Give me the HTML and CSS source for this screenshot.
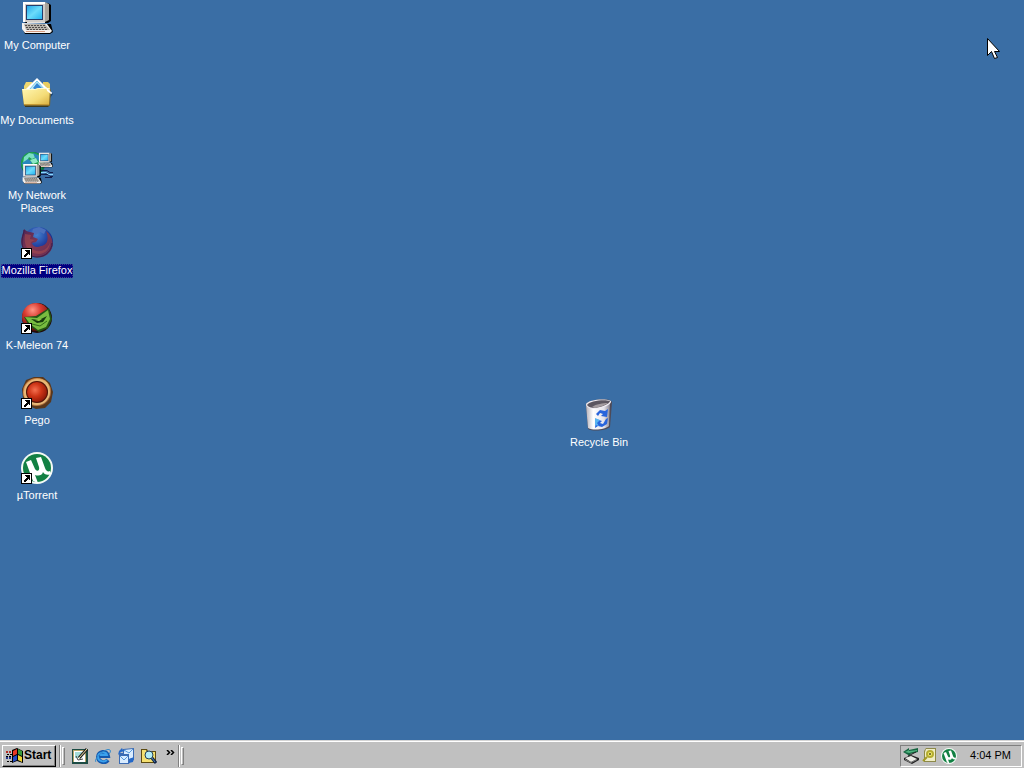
FILE: index.html
```html
<!DOCTYPE html>
<html lang="en">
<head>
<meta charset="utf-8">
<meta name="viewport" content="width=device-width, initial-scale=1">
<title>Desktop</title>
<link rel="stylesheet" href="styles.css">
</head>
<body>
<svg class="defs" aria-hidden="true">
  <defs>
    <linearGradient id="screen" x1="0" y1="0" x2="1" y2="1"><stop offset="0" stop-color="#25a8ea"/><stop offset=".5" stop-color="#6cdcfb"/><stop offset="1" stop-color="#25b4f0"/></linearGradient>
    <linearGradient id="folder" x1="0" y1="0" x2="1" y2="1"><stop offset="0" stop-color="#fff8b4"/><stop offset=".6" stop-color="#f4dc78"/><stop offset="1" stop-color="#d8ac3c"/></linearGradient>
    <linearGradient id="bin" x1="0" y1="0" x2="1" y2="0"><stop offset="0" stop-color="#b4b0b8"/><stop offset=".3" stop-color="#fff"/><stop offset=".75" stop-color="#e4e2ea"/><stop offset="1" stop-color="#8c8894"/></linearGradient>
    <radialGradient id="foxglobe" cx=".45" cy=".25" r=".7"><stop offset="0" stop-color="#4684d0"/><stop offset=".6" stop-color="#1d3b9c"/><stop offset="1" stop-color="#14206c"/></radialGradient>
    <linearGradient id="foxtail" x1="0" y1="0" x2="1" y2="1"><stop offset="0" stop-color="#4c2455"/><stop offset=".5" stop-color="#813853"/><stop offset="1" stop-color="#642b55"/></linearGradient>
    <radialGradient id="red" cx=".38" cy=".25" r=".75"><stop offset="0" stop-color="#ff9484"/><stop offset=".4" stop-color="#d83a30"/><stop offset="1" stop-color="#5c0c08"/></radialGradient>
    <radialGradient id="pegored" cx=".4" cy=".4" r=".65"><stop offset="0" stop-color="#f47050"/><stop offset=".5" stop-color="#cc3416"/><stop offset="1" stop-color="#8c1808"/></radialGradient>
    <linearGradient id="ring" x1="0" y1="0" x2="1" y2="1"><stop offset="0" stop-color="#b86834"/><stop offset=".5" stop-color="#eab468"/><stop offset="1" stop-color="#74361c"/></linearGradient>
    <symbol id="shortcut" viewBox="0 0 11 11"><path fill="#000" d="M0 0h11v11H0z"/><path fill="#fff" d="M1 1h9v9H1z"/><path fill="#000" d="M4 2h5v5H8V6H7v1H6v1H5v1H3V7h1V6h1V5h1V4H5V3H4z"/></symbol>
    <symbol id="pc" viewBox="0 0 32 32">
      <path fill="#000" d="M4 1h23l3 2v16l-3 2H5l-2-1z"/><path fill="#fff" d="M2 0h22v20H2z"/><path fill="#d0ccc8" d="M4 2h20v18H4z"/><path fill="#a8a49c" d="m24 0 4 2v16l-4 2z"/><path fill="#233c6c" d="M5 3h17v15H5z"/><path fill="url(#screen)" d="M6 4h15v13H6z"/><path fill="#e4e0dc" d="M6 20h18v1H6z"/>
      <path fill="#000" d="M2 22h28l2 8-3 2H4l-2-4z"/><path fill="#f4f2f0" d="m1 21 25 1 5 7-2 2H4l-3-4z"/><path fill="#b8b4ac" d="M3 22h21l5 6H5z"/><path stroke="#504c4c" stroke-dasharray="2 1" d="M4 23.500h20M5 25.500h21M6 27.500h21"/><path fill="#d49a80" d="M5 29h19v1H5z"/>
    </symbol>
    <symbol id="ut" viewBox="0 0 32 32">
      <circle cx="16" cy="16" r="16" fill="#f4faf5"/><circle cx="16" cy="16" r="14" fill="#128043"/><path fill="#fff" d="m5 10 5-2 4 9c2 3 5 2 4-2L15 6l5-1 4 11c1 3 3 4 5 3l1 3c-4 2-7 0-8-2-1 4-5 4-8 3l3 8-5-2z"/>
    </symbol>
  </defs>
</svg>

<main class="desktop">
  <nav class="icons" aria-label="Desktop icons">
    <button class="icon"><svg class="art" viewBox="0 0 32 32"><use href="#pc"/></svg><span class="label">My Computer</span></button>
    <button class="icon"><svg class="art" viewBox="0 0 32 32">
      <path fill="#3d3a20" d="M4 7h25v21l-2 2H4z"/><path fill="#f0d870" d="M3 9 5 5h6l3 4h13v18H3z"/><path fill="#e8cc60" d="M22 5h5l2 2v6h-7z"/><path fill="#1c4470" d="m17 3 15 14-3 4z"/><path fill="#fff" d="M16 1 4 13l11 8 15-4 1-1z"/><path fill="#c4ecf8" stroke="#73c9e9" d="m16 4-8 9h16z"/><path fill="#3588d4" d="m16 6-4 5 4 3 5-3z"/><path fill="#7b682e" d="m1 13 1-1h13l3-1h11l1 3-1 15H3z"/><path fill="url(#folder)" d="M1 12h13l3-1h12l-1 17H3z"/><path fill="none" stroke="#fffbd0" d="M1.500 12.500h13l3-1h11"/><path fill="#fff" d="m25 10 6 6-1 1-4-3z"/><path stroke="#c49833" d="M3 27.500h25"/>
    </svg><span class="label">My Documents</span></button>
    <button class="icon"><svg class="art" viewBox="0 0 32 32">
      <circle cx="12" cy="12" r="12" fill="#0a7046"/><circle cx="11" cy="11" r="11" fill="#1ea04f"/><path fill="#79dfc2" d="m3 5 5-4 5 1 2 3-4 2-3-2-2 4-4 3z"/><path fill="#2888bd" d="m1 11 6-4 4 3-2 5-5 3zM12 1l7 3-1 5-4-3z"/><path fill="#8ee8c8" d="m9 8 6-2 2 4-5 2z"/>
      <svg x="17" y="0" width="15" height="16" viewBox="0 0 32 32"><use href="#pc"/></svg>
      <svg x="1" y="12" width="20" height="20" viewBox="0 0 32 32"><use href="#pc"/></svg>
      <path fill="none" stroke="#131e4c" d="M20 18.500h6l3 2h3M20 22.500h7l2 2h3"/><path stroke="#8bd5ff" d="M20 20.500h5l3 2h4"/><path fill="none" stroke="#131e4c" d="M24 25.500h7"/>
    </svg><span class="label">My Network<br>Places</span></button>
    <button class="icon selected"><svg class="art" viewBox="0 0 32 32">
      <circle cx="17" cy="15" r="15" fill="url(#foxglobe)"/><path fill="#4a70bc" d="m12 2 6-2 7 3-2 4-4-2-4 3-4-2z"/><path fill="url(#foxtail)" d="M3 2c2 2 4 3 6 3l4 1-1 4 5 2-2 3-4 1c1 4 5 5 9 3 7-1 8-8 5-15 5 4 8 10 6 17-3 8-11 11-18 9C4 28-2 19 1 9z"/><path fill="#a54b4e" d="m4 7 6 1-1 4 5 1-4 2c-2 6 3 10 10 9 5-1 8-5 9-9 0 7-5 12-11 12C7 27 2 18 4 7z" opacity=".6"/><path fill="none" stroke="#3b204c" d="M3 3c0 4-2 6-2 12 0 9 7 15 15 15 9 0 15-7 15-14"/><use href="#shortcut" x="0" y="21" width="11" height="11"/>
    </svg><span class="label">Mozilla Firefox</span></button>
    <button class="icon"><svg class="art" viewBox="0 0 32 32">
      <circle cx="16" cy="16" r="15" fill="#210c08"/><circle cx="15" cy="15" r="14" fill="url(#red)"/><path fill="#235416" d="m3 15 12-1 13-8 3 11-4 9-9 4-10-6z"/><path fill="#78bc40" d="m4 15 12 1 11-8 2 9-4 8-8 3-8-6z"/><path fill="#173c0d" d="m10 17 8 1 8-4-4 6-6 1z"/><path fill="#a2d950" d="m14 18 7-1-3 2z"/><path fill="none" stroke="#326d19" d="m11 22 8 2 7-5"/><use href="#shortcut" x="0" y="21" width="11" height="11"/>
    </svg><span class="label">K-Meleon 74</span></button>
    <button class="icon"><svg class="art" viewBox="0 0 32 32">
      <path fill="#59371c" d="m5 3 8-3h9l7 6 3 9-2 10-6 6-9 1-9-4-4-7-1-9z"/><circle cx="16" cy="15" r="14" fill="url(#ring)"/><circle cx="16" cy="15" r="12" fill="none" stroke="#e8b878" stroke-width="2"/><circle cx="16" cy="15" r="11" fill="#521408"/><circle cx="16" cy="15" r="10" fill="url(#pegored)"/><use href="#shortcut" x="0" y="21" width="11" height="11"/>
    </svg><span class="label">Pego</span></button>
    <button class="icon"><svg class="art" viewBox="0 0 32 32"><use href="#ut"/><use href="#shortcut" x="0" y="21" width="11" height="11"/></svg><span class="label">µTorrent</span></button>
  </nav>
  <button class="icon recycle"><svg class="art" viewBox="0 0 32 32">
    <path fill="#4e4a57" d="M3 5C6 1 20-1 27 1l2 2-2 25c-3 3-16 5-22 2z"/><path fill="url(#bin)" d="M3 6 27 3l-1 24c-3 3-15 5-21 2z"/><path fill="#f0ecf2" d="M3 5C5 1 21-1 28 2c1 4-9 7-16 8-5 0-9-2-9-5z"/><path fill="#5c5660" d="M4 6c2-4 17-6 23-4 0 3-9 6-15 7-4 0-7-1-8-3z"/><path fill="#a49ca0" d="M9 8c4-3 11-4 16-4-3 2-8 4-13 5z"/>
    <path fill="#2864dc" d="m13 15 4-4 5 1 3-2-1 8-6-1 2-2-3-1-2 3zM25 19l-1 6-5 3-4-1-3 2 1-9 6 2-2 2 3 1 3-5z"/><path fill="#58b3f1" d="m12 19 5 2-3 3 2 3-4-1z"/>
  </svg><span class="label">Recycle Bin</span></button>
  <svg class="pointer" viewBox="0 0 13 21" aria-hidden="true"><path fill="#fff" stroke="#000" d="M.5.500v17l4-4 3 7 3-1-3-6h5z"/></svg>
</main>

<footer class="taskbar">
  <button class="start"><svg class="flag" viewBox="0 0 17 16" aria-hidden="true">
    <path fill="#000" d="m6 2 5-2 6 3v12l-6-2-5 2z"/><path fill="#e83826" d="m7 3 4-2v5L7 8z"/><path fill="#3a9a3c" d="m12 1 4 2v5l-4-2z"/><path fill="#234bc7" d="m7 9 4-2v5l-4 2z"/><path fill="#f0d332" d="m12 7 4 2v5l-4-2z"/><path stroke="#b52e24" stroke-width="2" stroke-dasharray="2 1" d="M0 4h6"/><path stroke="#24368c" stroke-width="2" stroke-dasharray="2 1" d="M0 10h6"/><path stroke="#000" stroke-dasharray="2 1" d="M1 6.500h5M0 8.500h6M1 13.500h5"/>
  </svg>Start</button>
  <span class="divider"></span><span class="grip"></span>
  <div class="quick">
    <button class="tool" aria-label="Show Desktop"><svg viewBox="0 0 16 16"><path fill="#1c4c44" d="M0 1h16v15H0z"/><path fill="#b4a468" d="M1 2h13v12H1z"/><path fill="#fff" d="M2 3h11v11H2z"/><path fill="#a4dcd8" d="M3 4h7v6H3z"/><path stroke="#222" stroke-width="3" d="m7 10 8-9"/><path stroke="#f4e4a0" d="m7 10 8-9"/><path fill="none" stroke="#444" d="m4 8 2 4 5-1"/></svg></button>
    <button class="tool" aria-label="Internet Explorer"><svg viewBox="0 0 16 16"><path fill="none" stroke="#1458ad" stroke-width="4" d="M13 12C10 16 3 14 3 9c0-6 9-7 10-1H5"/><path fill="none" stroke="#3aa1ed" stroke-width="2" d="M12 12C9 15 3 13 3 9c0-5 8-6 9-2H5"/><path fill="none" stroke="#328acb" d="M1 14C-2 11 11-1 15 2c1 1 0 3-1 4"/></svg></button>
    <button class="tool" aria-label="Outlook Express"><svg viewBox="0 0 16 16"><path fill="#3c6cb4" d="m5 1 11-1v12l-4 2-1 2H1V5h4z"/><path fill="#d9ecff" d="m6 2 9-1v9l-4 1V6H6zM2 8h8v7H2z"/><path fill="none" stroke="#5a9cdd" d="m6 2 5 3 4-4M2 8l4 4 4-4"/><path fill="#2468c8" d="m0 7 1-4 3-3 1 2 2 1-4 1zM16 9l-1 5-4 1v-2l2-1-2-1z"/></svg></button>
    <button class="tool" aria-label="Search"><svg viewBox="0 0 16 16"><path fill="#5c4b11" d="M0 1h6l1 2h8v12H0z"/><path fill="#f5e070" d="M1 2h4l1 2h8v10H1z"/><circle cx="8" cy="7" r="4" fill="#b3edf7" stroke="#203e58"/><path stroke="#102447" stroke-width="3" d="m11 10 4 5"/><path stroke="#4d85b7" d="m11 10 3 4"/></svg></button>
    <button class="more" aria-label="More"><svg viewBox="0 0 9 5"><path fill="none" stroke="#000" d="m1 0 2.500 2.500L1 5M5 0l2.500 2.500L5 5" stroke-width="1.500"/></svg></button>
  </div>
  <span class="divider"></span><span class="grip"></span>
  <div class="tray">
    <svg viewBox="0 0 16 16" aria-label="Safely remove hardware"><path fill="#222" d="m1 10 7-3 8 3v2l-7 4-8-4z"/><path fill="#ecece7" d="m2 10 6-2 6 3-6 3z"/><path fill="#858585" d="m2 11 6 3 6-3v1l-6 3-6-3z"/><path fill="#16653f" d="m0 4 6-4v2l9-2v4L7 6v2z"/><path fill="#50b380" d="m2 4 4-2v1l8-1v1L6 5z"/><path stroke="#222" d="m5 8 8-4"/></svg>
    <svg viewBox="0 0 16 16" aria-label="Updates"><path fill="#8d8949" d="M4 0h10v14H2V3z"/><path fill="#efedc5" d="M4 1h9v12H3V4z"/><circle cx="8" cy="6" r="3" fill="#f5ef70" stroke="#b5ad30" stroke-width="2"/><circle cx="8" cy="6" r="1" fill="#4c4b22"/><path stroke="#a29a24" stroke-width="2" d="m5 9-4 4"/></svg>
    <svg viewBox="0 0 32 32" aria-label="µTorrent"><use href="#ut"/></svg>
    <time class="clock">4:04 PM</time>
  </div>
</footer>
</body>
</html>
```
FILE: styles.css
```css
* { box-sizing: border-box; }

body {
  display: flex;
  flex-direction: column;
  min-height: 100vh;
  margin: 0;
  background: #3a6ea5;
  font: 11px/13px "Liberation Sans", Arial, sans-serif;
}

button {
  padding: 0;
  border: 0;
  background: none;
  color: inherit;
  font: inherit;
}

svg { display: block; flex: none; }
.defs { position: absolute; width: 0; height: 0; }

.desktop {
  position: relative;
  flex: 1;
  overflow: hidden;
  color: #fff;
}

.icons {
  display: grid;
  grid-auto-rows: 75px;
  width: 74px;
}

.icon {
  display: flex;
  flex-direction: column;
  align-items: center;
  gap: 5px;
  width: 74px;
  height: 75px;
  padding-top: 2px;
}

.art { width: 32px; height: 32px; overflow: visible; }
.label { padding: 0 1px 1px; text-align: center; white-space: nowrap; }
.selected .label { background: #000080; outline: 1px dotted #3a3a90; outline-offset: -1px; }

/* Free placement on the desktop canvas */
.recycle { position: absolute; left: 562px; top: 397px; }
.pointer { position: absolute; left: 987px; top: 38px; width: 13px; height: 21px; }

.taskbar {
  display: flex;
  align-items: center;
  height: 28px;
  padding: 2px 2px 0;
  border-top: 1px solid #d4d4d4;
  box-shadow: inset 0 1px #fff;
  background: #c0c0c0;
  color: #000;
}

.start {
  display: flex;
  align-items: center;
  gap: 1px;
  width: 54px;
  height: 22px;
  padding-left: 3px;
  border: 1px solid;
  border-color: #fff #000 #000 #fff;
  box-shadow: inset -1px -1px #808080;
  font-size: 12px;
  font-weight: bold;
}
.flag { width: 17px; height: 16px; }

.divider {
  width: 2px;
  height: 22px;
  margin-left: 3px;
  border-left: 1px solid #808080;
  border-right: 1px solid #fff;
}
.grip {
  width: 3px;
  height: 18px;
  margin-left: 1px;
  border: 1px solid;
  border-color: #fff #808080 #808080 #fff;
}

.quick { display: flex; align-items: center; gap: 7px; margin-left: 7px; }
.tool svg { width: 16px; height: 16px; }
.more { align-self: flex-start; padding: 2px 0 2px 2px; }
.more svg { width: 9px; height: 5px; }

.tray {
  display: flex;
  align-items: center;
  gap: 3px;
  height: 22px;
  margin-left: auto;
  padding: 0 10px 0 2px;
  border: 1px solid;
  border-color: #808080 #fff #fff #808080;
}
.tray svg { width: 16px; height: 16px; }
.clock { margin-left: 10px; white-space: nowrap; }
```
